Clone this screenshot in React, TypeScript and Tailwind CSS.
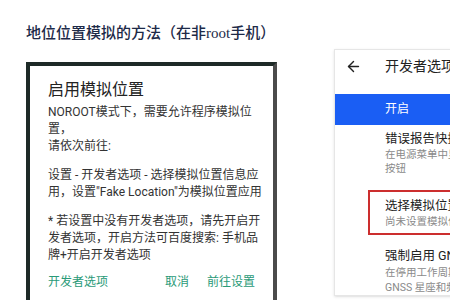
import React from 'react';
import { ArrowLeft } from 'lucide-react';

const sans = { fontFamily: 'Roboto, "Noto Sans CJK SC", sans-serif' };

function DialogShot() {
    return (
        <div className="mt-[13px] w-[251px] h-[260px] shrink-0 border-t-4 border-l-4 border-r-4 border-[#1e2a27] border-r-[#4b4b4b] bg-white">
            <div className="pl-[18px] pt-[14px] text-[#333]" style={sans}>
                <p className="text-[16px] leading-[20px] text-[#222]">启用模拟位置</p>
                <div className="mt-[4px] text-[12px] leading-[17px] whitespace-nowrap">
                    <p>NOROOT模式下，需要允许程序模拟位</p>
                    <p>置，</p>
                    <p>请依次前往:</p>
                </div>
                <div className="mt-[12px] text-[12px] leading-[17px] whitespace-nowrap">
                    <p>设置 - 开发者选项 - 选择模拟位置信息应</p>
                    <p>用，设置"Fake Location"为模拟位置应用</p>
                </div>
                <div className="mt-[12px] text-[12px] leading-[17px] whitespace-nowrap">
                    <p>* 若设置中没有开发者选项，请先开启开</p>
                    <p>发者选项，开启方法可百度搜索: 手机品</p>
                    <p>牌+开启开发者选项</p>
                </div>
                <div className="mt-[10px] flex items-center text-[12px] leading-[17px] text-[#2a9a78] pr-[18px]">
                    <span>开发者选项</span>
                    <span className="ml-auto">取消</span>
                    <span className="ml-[18px]">前往设置</span>
                </div>
            </div>
        </div>
    );
}

function SettingsShot() {
    return (
        <div className="ml-[57px] w-[200px] h-[247px] shrink-0 overflow-hidden border border-[#e6e6e6] bg-white shadow-sm flex flex-col" style={sans}>
            <div className="h-[45px] flex items-start pt-[6px] pl-[10px]">
                <div className="h-[20px] flex items-center">
                    <ArrowLeft size={17} strokeWidth={2} className="text-[#222]" />
                </div>
                <span className="ml-[23px] text-[14px] leading-[20px] text-[#222] whitespace-nowrap">开发者选项</span>
            </div>
            <div className="h-[31px] bg-[#1a5ef4] flex items-center pl-[50px] text-[12px] text-white">开启</div>
            <div className="pl-[50px] pt-[5px] whitespace-nowrap">
                <p className="text-[12.5px] leading-[18px] text-[#222]">错误报告快捷方式</p>
                <p className="text-[10.5px] leading-[14px] text-[#8a8a8a]">在电源菜单中显示用于提交错误报告的</p>
                <p className="text-[10.5px] leading-[14px] text-[#8a8a8a]">按钮</p>
            </div>
            <div className="ml-[33px] mt-[14px] h-[46px] border-2 border-[#cc2e2e] pl-[15px] pt-[5px] whitespace-nowrap">
                <p className="text-[12.5px] leading-[18px] text-[#222]">选择模拟位置信息应用</p>
                <p className="text-[10.5px] leading-[14px] text-[#8a8a8a]">尚未设置模拟位置信息应用</p>
            </div>
            <div className="pl-[50px] mt-[12px] whitespace-nowrap">
                <p className="text-[12.5px] leading-[18px] text-[#222]">强制启用 GNSS 测量结果</p>
                <p className="text-[10.5px] leading-[15px] text-[#8a8a8a]">在停用工作周期的情况下跟踪所有</p>
                <p className="text-[10.5px] leading-[15px] text-[#8a8a8a]">GNSS 星座和频率</p>
            </div>
        </div>
    );
}

export default function App() {
    return (
        <div className="w-[450px] h-[300px] overflow-hidden bg-white">
            <h1
                className="pt-[23px] pl-[26px] text-[15px] leading-[20px] font-medium text-[#1d2a48] whitespace-nowrap"
                style={{ fontFamily: '"Liberation Serif", "Noto Sans CJK SC", serif' }}
            >
                地位位置模拟的方法（在非root手机）
            </h1>
            <div className="mt-[6px] pl-[26px] flex items-start">
                <DialogShot />
                <SettingsShot />
            </div>
        </div>
    );
}
